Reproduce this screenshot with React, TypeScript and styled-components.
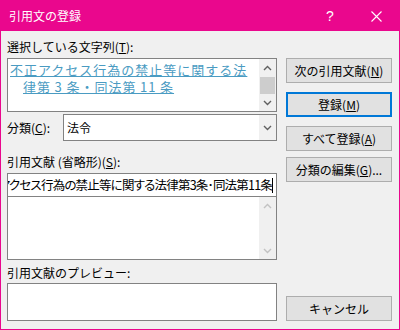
import React from 'react';
import styled, { createGlobalStyle } from 'styled-components';

const GlobalStyle = createGlobalStyle`
  html, body {
    margin: 0;
    padding: 0;
  }
  body {
    width: 400px;
    height: 330px;
    overflow: hidden;
    background: #ffffff;
    font-family: "Noto Sans CJK JP", "Noto Sans", sans-serif;
  }
`;

const Chevron = ({ up, color }: { up?: boolean; color: string }) => (
  <svg width="9" height="6" viewBox="0 0 9 6">
    <polyline
      points={up ? '1,5 4.5,1.5 8,5' : '1,1 4.5,4.5 8,1'}
      fill="none"
      stroke={color}
      strokeWidth="1.4"
    />
  </svg>
);

const ScrollBar = ({ disabled }: { disabled?: boolean }) => {
  const c = disabled ? '#c2c2c2' : '#606060';
  return (
    <Track>
      <Arrow>
        <Chevron up color={c} />
      </Arrow>
      {!disabled && <Thumb />}
      <TrackFill />
      <Arrow>
        <Chevron color={c} />
      </Arrow>
    </Track>
  );
};

const App = () => {
  return (
    <>
      <GlobalStyle />
      <Window>
        <TitleBar>
          <Title>引用文の登録</Title>
          <Caption>?</Caption>
          <Caption>
            <svg width="11" height="11" viewBox="0 0 11 11">
              <path d="M0.5 0.5 L10.5 10.5 M10.5 0.5 L0.5 10.5" stroke="#fff" strokeWidth="1.1" />
            </svg>
          </Caption>
        </TitleBar>
        <Body>
          <LeftColumn>
            <Label>
              選択している文字列(<u>T</u>):
            </Label>
            <Box $mt={3} $h={54}>
              <LinkText>
                不正アクセス行為の禁止等に関する法
                <br />
                {'律第\u20093\u2009条・同法第\u200911\u2009条'}
              </LinkText>
              <ScrollBar />
            </Box>
            <ComboRow>
              <InlineLabel>
                分類(<u>C</u>):
              </InlineLabel>
              <Combo>
                <ComboValue>法令</ComboValue>
                <DropButton>
                  <Chevron color="#606060" />
                </DropButton>
              </Combo>
            </ComboRow>
            <Label $mt={13}>
              引用文献 (省略形)(<u>S</u>):
            </Label>
            <Input>
              <InputText>不正アクセス行為の禁止等に関する法律第3条･同法第11条</InputText>
              <Caret />
            </Input>
            <Box $mt={-1} $h={64}>
              <Spacer />
              <ScrollBar disabled />
            </Box>
            <Label $mt={5}>引用文献のプレビュー:</Label>
            <Box $mt={2} $h={38} />
          </LeftColumn>
          <RightColumn>
            <Button $mt={19}>
              次の引用文献(<u>N</u>)
            </Button>
            <Button $mt={9} $primary>
              登録(<u>M</u>)
            </Button>
            <Button $mt={9}>
              すべて登録(<u>A</u>)
            </Button>
            <Button $mt={6}>
              分類の編集(<u>G</u>)...
            </Button>
            <Button $mt="auto">キャンセル</Button>
          </RightColumn>
        </Body>
      </Window>
    </>
  );
};

export default App;

const Window = styled.div`
  width: 400px;
  height: 330px;
  box-sizing: border-box;
  border: 1px solid #ea078d;
  display: flex;
  flex-direction: column;
  background: #f0f0f0;
`;
const TitleBar = styled.div`
  height: 30px;
  flex: none;
  background: #ea078d;
  color: #ffffff;
  display: flex;
  align-items: center;
`;
const Title = styled.div`
  flex: 1;
  padding-left: 8px;
  font-size: 12px;
  line-height: 16px;
`;
const Caption = styled.div`
  width: 46px;
  height: 30px;
  display: flex;
  align-items: center;
  justify-content: center;
  font-size: 14px;
  font-family: "Liberation Sans", sans-serif;
`;
const Body = styled.div`
  flex: 1;
  display: flex;
  padding: 8px 6px 8px 6px;
  color: #000000;
  font-size: 12px;
`;
const LeftColumn = styled.div`
  width: 270px;
  display: flex;
  flex-direction: column;
`;
const RightColumn = styled.div`
  width: 106px;
  margin-left: 9px;
  display: flex;
  flex-direction: column;
`;
const Label = styled.div<{ $mt?: number }>`
  height: 16px;
  line-height: 16px;
  margin-top: ${(p) => p.$mt || 0}px;
  white-space: nowrap;
`;
const Box = styled.div<{ $mt: number; $h: number }>`
  margin-top: ${(p) => p.$mt}px;
  height: ${(p) => p.$h}px;
  box-sizing: border-box;
  border: 1px solid #828282;
  background: #ffffff;
  display: flex;
`;
const LinkText = styled.div`
  flex: 1;
  padding: 2px 0 0 15px;
  text-indent: -13px;
  font-size: 13px;
  letter-spacing: 1px;
  line-height: 17px;
  color: #4a9bc2;
  text-decoration: underline;
  white-space: nowrap;
  overflow: hidden;
`;
const Spacer = styled.div`
  flex: 1;
`;
const Track = styled.div`
  width: 17px;
  background: #f0f0f0;
  display: flex;
  flex-direction: column;
`;
const Arrow = styled.div`
  height: 17px;
  flex: none;
  display: flex;
  align-items: center;
  justify-content: center;
`;
const Thumb = styled.div`
  height: 17px;
  margin: 1px 1px 0 1px;
  background: #cdcdcd;
`;
const TrackFill = styled.div`
  flex: 1;
`;
const ComboRow = styled.div`
  margin-top: 2px;
  height: 27px;
  display: flex;
  align-items: center;
`;
const InlineLabel = styled.div`
  width: 56px;
  line-height: 16px;
`;
const Combo = styled.div`
  flex: 1;
  height: 27px;
  box-sizing: border-box;
  border: 1px solid #828282;
  background: #ffffff;
  display: flex;
`;
const ComboValue = styled.div`
  flex: 1;
  padding-left: 3px;
  line-height: 25px;
  font-size: 12px;
`;
const DropButton = styled.div`
  width: 17px;
  background: #f0f0f0;
  display: flex;
  align-items: center;
  justify-content: center;
`;
const Input = styled.div`
  margin-top: 3px;
  height: 24px;
  box-sizing: border-box;
  border: 1px solid #828282;
  background: #ffffff;
  display: flex;
  justify-content: flex-end;
  align-items: center;
  overflow: hidden;
  padding-right: 3px;
`;
const InputText = styled.div`
  flex: none;
  font-size: 12.5px;
  letter-spacing: -0.8px;
  line-height: 20px;
  white-space: nowrap;
  font-feature-settings: "palt";
`;
const Caret = styled.div`
  flex: none;
  width: 1px;
  height: 15px;
  background: #000000;
`;
const Button = styled.div<{ $mt: number | 'auto'; $primary?: boolean }>`
  margin-top: ${(p) => (p.$mt === 'auto' ? 'auto' : `${p.$mt}px`)};
  height: 25px;
  box-sizing: border-box;
  border: ${(p) => (p.$primary ? '2px solid #0078d7' : '1px solid #adadad')};
  background: #e1e1e1;
  display: flex;
  align-items: center;
  justify-content: center;
  font-size: 12px;
  white-space: nowrap;
`;
